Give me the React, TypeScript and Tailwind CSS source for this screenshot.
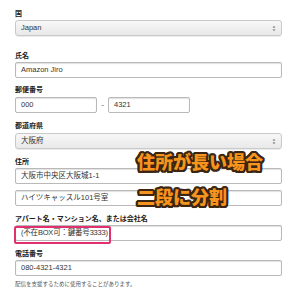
import React from "react";

const font = { fontFamily: '"Liberation Sans", "Noto Sans CJK JP", sans-serif' };

function Label({ children, className = "" }: { children: React.ReactNode; className?: string }) {
  return (
    <div className={`text-[7px] leading-[8px] font-bold text-[#222] h-[8px] ${className}`}>{children}</div>
  );
}

function Input({ value, className = "" }: { value: string; className?: string }) {
  return (
    <div
      className={`h-[16px] border border-[#b9b9b9] rounded-[2px] bg-white shadow-[inset_0_1px_1px_rgba(0,0,0,0.12)] flex items-center pl-[5px] text-[7.5px] text-[#333] whitespace-nowrap ${className}`}
    >
      {value}
    </div>
  );
}

function Select({ value, className = "" }: { value: string; className?: string }) {
  return (
    <div
      className={`h-[16px] border border-[#c9c9c9] rounded-[3px] bg-gradient-to-b from-[#f7f7f7] to-[#e9e9e9] shadow-[0_1px_0_rgba(0,0,0,0.08)] flex items-center justify-between pl-[5px] pr-[5px] text-[7.5px] text-[#333] ${className}`}
    >
      <span>{value}</span>
      <svg width="4" height="7" viewBox="0 0 4 7">
        <path d="M0.5 2.5 L2 1 L3.5 2.5 Z" fill="#666" />
        <path d="M0.5 4.5 L2 6 L3.5 4.5 Z" fill="#666" />
      </svg>
    </div>
  );
}

const stroke =
  "[text-shadow:2px_0_0_#3a2612,-2px_0_0_#3a2612,0_2px_0_#3a2612,0_-2px_0_#3a2612,1.5px_1.5px_0_#3a2612,-1.5px_-1.5px_0_#3a2612,1.5px_-1.5px_0_#3a2612,-1.5px_1.5px_0_#3a2612,2px_1px_0_#3a2612,-2px_1px_0_#3a2612,2px_-1px_0_#3a2612,-2px_-1px_0_#3a2612,1px_2px_0_#3a2612,-1px_2px_0_#3a2612,1px_-2px_0_#3a2612,-1px_-2px_0_#3a2612]";

export default function App() {
  return (
    <div className="w-[300px] h-[300px] bg-white relative overflow-hidden" style={font}>
      <div className="pl-[15px] pr-[18px] pt-[10px]">
        <Label>国</Label>
        <Select value="Japan" className="mt-[2px]" />

        <Label className="mt-[16px]">氏名</Label>
        <Input value="Amazon Jiro" className="mt-[2px]" />

        <Label className="mt-[8px]">郵便番号</Label>
        <div className="flex items-center mt-[3px]">
          <Input value="000" className="w-[82px]" />
          <div className="w-[11px] text-center text-[8px] text-[#555]">-</div>
          <Input value="4321" className="w-[82px]" />
        </div>

        <Label className="mt-[9px]">都道府県</Label>
        <Select value="大阪府" className="mt-[3px]" />

        <Label className="mt-[9px]">住所</Label>
        <Input value="大阪市中央区大阪城1-1" className="mt-[2px]" />
        <Input value="ハイツキャッスル101号室" className="mt-[6px]" />

        <Label className="mt-[9px]">アパート名・マンション名、または会社名</Label>
        <div className="relative mt-[2px]">
          <Input value="(不在BOX可：鍵番号3333)" className="tracking-[-0.2px]" />
          <div className="absolute left-[-1px] top-[1px] w-[97px] h-[18px] border-2 border-[#e0306f] rounded-[2px]" />
        </div>

        <Label className="mt-[9px]">電話番号</Label>
        <Input value="080-4321-4321" className="mt-[2px]" />

        <div className="mt-[4px] text-[5.5px] leading-[8px] text-[#555]">
          配信を支援するために使用することがあります。
        </div>
      </div>

      <div
        className={`absolute left-[137px] top-[151px] text-[18px] leading-[20px] font-black text-[#f7941d] ${stroke}`}
        style={{ fontFamily: '"Noto Sans CJK JP", sans-serif' }}
      >
        <div>住所が長い場合</div>
        <div className="mt-[15px]">二段に分割</div>
      </div>
    </div>
  );
}
